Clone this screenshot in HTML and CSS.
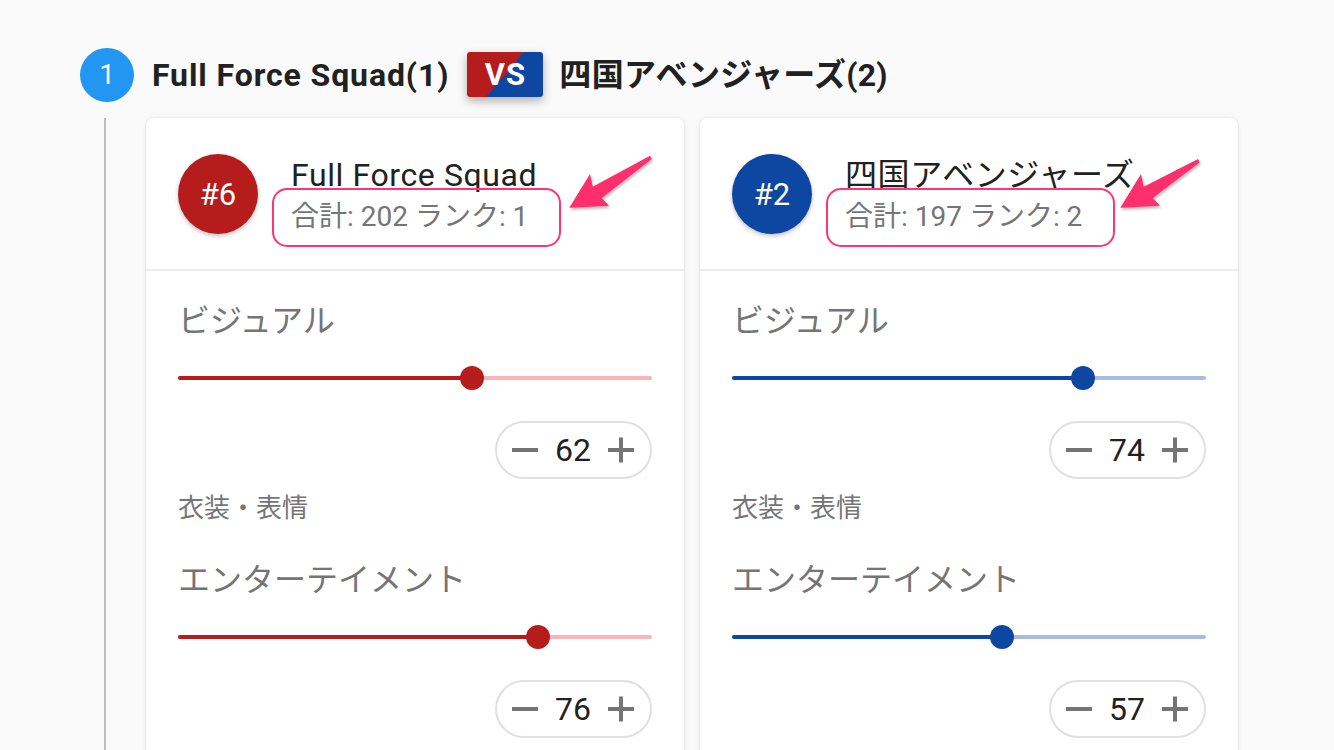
FILE: index.html
```html
<!DOCTYPE html>
<html lang="ja">
<head>
<meta charset="utf-8">
<title>Match</title>
<link rel="stylesheet" href="styles.css">
</head>
<body>
<div class="page">
  <div class="step">
    <div class="step-head">
      <span class="step-icon">1</span>
      <span class="team-name latin">Full Force Squad(1)</span>
      <span class="vs">VS</span>
      <span class="team-name">四国アベンジャーズ(2)</span>
    </div>
    <div class="step-body">
      <div class="cards">
        <div class="card red">
          <div class="card-header">
            <div class="avatar">#6</div>
            <div class="header-text">
              <div class="card-title">Full Force Squad</div>
              <div class="card-sub"><span class="sub-text">合計: 202 ランク: 1</span></div>
            </div>
            <svg class="arrow" viewBox="0 0 110 70" width="110" height="70"><polygon points="18.3,59.7 39,26 41.7,38.7 99,7.7 100.7,11 50.7,50 58,57.7"/></svg>
          </div>
          <div class="card-content">
            <div class="crit-label">ビジュアル</div>
            <div class="slider">
              <div class="rail"></div>
              <div class="track" style="width:62%"></div>
              <div class="thumb" style="left:62%"></div>
            </div>
            <div class="stepper-row">
              <div class="stepper">
                <svg class="icon" viewBox="0 0 32 32" width="32" height="32"><rect x="3" y="14" width="26" height="4"/></svg>
                <span class="num">62</span>
                <svg class="icon" viewBox="0 0 32 32" width="32" height="32"><rect x="3" y="14" width="26" height="4"/><rect x="14" y="3.5" width="4" height="25"/></svg>
              </div>
            </div>
            <div class="hint">衣装・表情</div>
            <div class="crit-label second">エンターテイメント</div>
            <div class="slider">
              <div class="rail"></div>
              <div class="track" style="width:76%"></div>
              <div class="thumb" style="left:76%"></div>
            </div>
            <div class="stepper-row">
              <div class="stepper">
                <svg class="icon" viewBox="0 0 32 32" width="32" height="32"><rect x="3" y="14" width="26" height="4"/></svg>
                <span class="num">76</span>
                <svg class="icon" viewBox="0 0 32 32" width="32" height="32"><rect x="3" y="14" width="26" height="4"/><rect x="14" y="3.5" width="4" height="25"/></svg>
              </div>
            </div>
          </div>
        </div>

        <div class="card blue">
          <div class="card-header">
            <div class="avatar">#2</div>
            <div class="header-text">
              <div class="card-title">四国アベンジャーズ</div>
              <div class="card-sub"><span class="sub-text">合計: 197 ランク: 2</span></div>
            </div>
            <svg class="arrow arrow-r" viewBox="0 0 110 70" width="110" height="70"><polygon points="18.3,59.7 39,26 41.7,38.7 96,11 97.7,14.3 50.7,50 58,57.7"/></svg>
          </div>
          <div class="card-content">
            <div class="crit-label">ビジュアル</div>
            <div class="slider">
              <div class="rail"></div>
              <div class="track" style="width:74%"></div>
              <div class="thumb" style="left:74%"></div>
            </div>
            <div class="stepper-row">
              <div class="stepper">
                <svg class="icon" viewBox="0 0 32 32" width="32" height="32"><rect x="3" y="14" width="26" height="4"/></svg>
                <span class="num">74</span>
                <svg class="icon" viewBox="0 0 32 32" width="32" height="32"><rect x="3" y="14" width="26" height="4"/><rect x="14" y="3.5" width="4" height="25"/></svg>
              </div>
            </div>
            <div class="hint">衣装・表情</div>
            <div class="crit-label second">エンターテイメント</div>
            <div class="slider">
              <div class="rail"></div>
              <div class="track" style="width:57%"></div>
              <div class="thumb" style="left:57%"></div>
            </div>
            <div class="stepper-row">
              <div class="stepper">
                <svg class="icon" viewBox="0 0 32 32" width="32" height="32"><rect x="3" y="14" width="26" height="4"/></svg>
                <span class="num">57</span>
                <svg class="icon" viewBox="0 0 32 32" width="32" height="32"><rect x="3" y="14" width="26" height="4"/><rect x="14" y="3.5" width="4" height="25"/></svg>
              </div>
            </div>
          </div>
        </div>
      </div>
    </div>
  </div>
</div>
</body>
</html>
```

FILE: styles.css
```css
* { box-sizing: border-box; }
html, body {
  margin: 0;
  background: #fafafa;
  font-family: Roboto, "Noto Sans CJK JP", sans-serif;
  color: #212121;
  overflow: hidden;
}
.page {
  padding: 47px 0 0 80px;
}
.step-head {
  display: flex;
  align-items: center;
  height: 55px;
  gap: 18px;
}
.step-icon {
  width: 54px;
  height: 54px;
  border-radius: 50%;
  background: #2196f3;
  color: #fff;
  font-size: 28px;
  display: flex;
  align-items: center;
  justify-content: center;
  flex: none;
}
.team-name {
  font-size: 32px;
  font-weight: 700;
  color: #212121;
  line-height: 1;
  letter-spacing: 0.3px;
}
.team-name.latin {
  letter-spacing: 0.9px;
}
.vs {
  width: 76px;
  height: 45px;
  border-radius: 3px;
  background: linear-gradient(130deg, #b71c1c 50%, #0d47a1 50%);
  color: #fff;
  font-weight: 700;
  font-size: 31px;
  letter-spacing: 1px;
  display: flex;
  align-items: center;
  justify-content: center;
  box-shadow: 0 4px 10px rgba(0,0,0,0.3);
  margin-right: -2px;
}
.step-body {
  margin-left: 24px;
  margin-top: 16px;
  border-left: 2px solid #bdbdbd;
  padding-left: 40px;
  height: 700px;
}
.cards {
  display: grid;
  grid-template-columns: 538px 538px;
  gap: 16px;
}
.card {
  background: #fff;
  border-radius: 8px;
  box-shadow: 0 2px 2px -1px rgba(0,0,0,0.12), 0 1px 3px rgba(0,0,0,0.10), 0 0 6px rgba(0,0,0,0.06);
  height: 700px;
}
.card-header {
  position: relative;
  display: flex;
  align-items: center;
  padding: 36px 32px 35px;
  border-bottom: 2px solid #ececec;
}
.avatar {
  width: 80px;
  height: 80px;
  border-radius: 50%;
  color: #fff;
  font-size: 31px;
  display: flex;
  align-items: center;
  justify-content: center;
  flex: none;
  margin-right: 33px;
  box-shadow: 0 2px 4px rgba(0,0,0,0.25);
}
.red .avatar { background: #b71c1c; }
.blue .avatar { background: #0d47a1; }
.header-text {
  display: flex;
  flex-direction: column;
  margin: 1px 0 -3px;
}
.card-title {
  font-size: 32px;
  line-height: 38px;
  color: #212121;
  letter-spacing: 0.6px;
}
.card-sub {
  font-size: 28px;
  line-height: 40px;
  color: #757575;
  margin-top: 3px;
}
.sub-text {
  position: relative;
  display: inline-block;
}
.sub-text::after {
  content: "";
  position: absolute;
  top: -9px;
  bottom: -10px;
  left: -19px;
  right: -33px;
  border: 2.5px solid #ff3574;
  border-radius: 15px;
}
.arrow {
  position: absolute;
  left: 405px;
  top: 30px;
  fill: #ff2e6e;
  filter: drop-shadow(1px 2px 1.5px rgba(0,0,0,0.3));
}
.arrow-r {
  left: 402px;
  top: 30px;
}
.card-content {
  padding: 32px;
}
.crit-label {
  font-size: 32px;
  line-height: 36px;
  color: #757575;
}
.crit-label.second {
  margin-top: 34px;
}
.slider {
  position: relative;
  height: 54px;
  margin-top: 12px;
}
.rail, .track {
  position: absolute;
  left: 0;
  top: 25px;
  height: 4px;
  border-radius: 2px;
}
.rail { width: 100%; opacity: 0.36; }
.red .rail, .red .track, .red .thumb { background: #b71c1c; }
.red .rail { background: #e8323f; }
.blue .rail, .blue .track, .blue .thumb { background: #0d47a1; }
.thumb {
  position: absolute;
  top: 15px;
  width: 24px;
  height: 24px;
  margin-left: -12px;
  border-radius: 50%;
}
.stepper-row {
  display: flex;
  justify-content: flex-end;
  margin-top: 16px;
}
.stepper {
  display: inline-flex;
  align-items: center;
  height: 58px;
  border: 2px solid #e0e0e0;
  border-radius: 29px;
  padding: 0 13px 0 12px;
  gap: 14px;
}
.icon { fill: #757575; display: block; }
.num {
  font-size: 32px;
  color: #212121;
  line-height: 1;
}
.hint {
  font-size: 26px;
  line-height: 39px;
  color: #757575;
  margin-top: 10px;
}
```
